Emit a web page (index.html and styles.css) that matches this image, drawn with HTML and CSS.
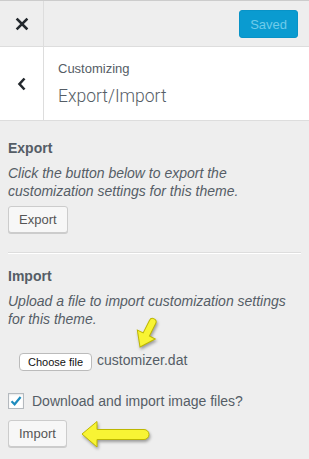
FILE: index.html
```html
<!DOCTYPE html>
<html lang="en">
<head>
    <meta charset="UTF-8">
    <meta name="viewport" content="width=device-width, initial-scale=1.0">
    <title>Customizing Export/Import</title>
    <link rel="stylesheet" href="styles.css">
</head>
<body>
    <header class="topbar">
        <div class="close">
            <svg width="14" height="14" viewBox="0 0 14 14"><path d="M2.5 2.5 L11.5 11.5 M11.5 2.5 L2.5 11.5" stroke="#23282d" stroke-width="2.5" stroke-linecap="square"/></svg>
        </div>
        <div class="topbar-actions">
            <button class="btn-saved">Saved</button>
        </div>
    </header>

    <div class="section-title">
        <div class="back">
            <svg width="12" height="14" viewBox="0 0 12 14"><path d="M8.5 1.5 L3.5 7 L8.5 12.5" fill="none" stroke="#23282d" stroke-width="2.6"/></svg>
        </div>
        <div class="title-text">
            <span class="crumb">Customizing</span>
            <h3 class="panel-name">Export/Import</h3>
        </div>
    </div>

    <main class="controls">
        <section class="control">
            <h4 class="control-title">Export</h4>
            <p class="control-desc">Click the button below to export the customization settings for this theme.</p>
            <button class="wp-btn">Export</button>
        </section>

        <section class="control control-import">
            <h4 class="control-title">Import</h4>
            <p class="control-desc">Upload a file to import customization settings for this theme.</p>
            <div class="file-row">
                <button class="file-btn">Choose file</button>
                <span class="file-name">customizer.dat</span>
            </div>
            <label class="check-row">
                <span class="checkbox">
                    <svg width="14" height="14" viewBox="0 0 14 14"><path d="M2.5 7.2 L5.6 10.3 L11.6 3" fill="none" stroke="#1e8cbe" stroke-width="2.2"/></svg>
                </span>
                Download and import image files?
            </label>
            <button class="wp-btn">Import</button>
        </section>
    </main>

    <!-- yellow pointer arrows drawn over the screenshot -->
    <svg class="annotations" width="309" height="459" viewBox="0 0 309 459">
        <path transform="translate(153.9 319.3) rotate(116.6)" d="M31 0 L17 -10 L17 -3.5 L3 -3.5 A3.5 3.5 0 0 0 3 3.5 L17 3.5 L17 10 Z" fill="#f8f434" stroke="#bdb700" stroke-width="1"/>
        <path d="M82 434 L97 421.5 L97 429.5 L144 429.5 A5 5 0 0 1 144 439.5 L97 439.5 L97 447 Z" fill="#f8f434" stroke="#bdb700" stroke-width="1"/>
    </svg>
</body>
</html>
```

FILE: styles.css
```css
body {
    margin: 0;
    background: #eee;
    font-family: "Liberation Sans", Arial, sans-serif;
    color: #555d66;
    position: relative;
    width: 309px;
    height: 459px;
    overflow: hidden;
}

.topbar {
    display: flex;
    height: 45px;
    border-top: 1px solid #ccc;
    border-bottom: 1px solid #ddd;
    background: #eee;
}

.close {
    width: 43px;
    border-right: 1px solid #ddd;
    display: flex;
    justify-content: center;
    align-items: center;
}

.topbar-actions {
    flex: 1;
    display: flex;
    justify-content: flex-end;
    align-items: center;
    padding-right: 11px;
}

.btn-saved {
    height: 28px;
    padding: 0 10px;
    margin-top: 1px;
    border: 1px solid #0893c7;
    border-radius: 3px;
    background: #0a9bd0;
    color: #6fcbea;
    font-family: "Liberation Sans", Arial, sans-serif;
    font-size: 13px;
}

.section-title {
    display: flex;
    height: 73px;
    background: #fff;
    border-bottom: 1px solid #ddd;
}

.back {
    width: 43px;
    border-right: 1px solid #ddd;
    display: flex;
    justify-content: center;
    align-items: center;
}

.title-text {
    padding: 14px 0 0 14px;
}

.crumb {
    display: block;
    font-size: 13px;
    line-height: 16px;
}

.panel-name {
    margin: 6px 0 0;
    font-family: Roboto, "Liberation Sans", sans-serif;
    font-weight: 300;
    font-size: 17.5px;
    line-height: 26px;
    color: #555d66;
}

.controls {
    padding: 0 8px;
}

.control {
    padding: 17px 0 19px;
}

.control + .control {
    border-top: 1px solid #ddd;
    box-shadow: inset 0 1px 0 #fff;
    padding-top: 13px;
}

.control-title {
    margin: 0;
    font-size: 14px;
    line-height: 20px;
    font-weight: bold;
}

.control-desc {
    margin: 6px 0 0;
    font-size: 14px;
    line-height: 18px;
    font-style: italic;
}

.wp-btn {
    display: block;
    margin-top: 6px;
    height: 27px;
    padding: 0 10px;
    border: 1px solid #ccc;
    border-radius: 3px;
    background: #f7f7f7;
    box-shadow: 0 1px 0 #ccc;
    color: #555;
    font-family: "Liberation Sans", Arial, sans-serif;
    font-size: 13px;
}

.file-row {
    display: flex;
    align-items: flex-start;
    margin: 25px 0 0 11px;
}

.file-btn {
    height: 18px;
    padding: 0 8px;
    border: 1px solid #bbb;
    border-radius: 4px;
    background: #fff;
    color: #111;
    font-family: "Liberation Sans", Arial, sans-serif;
    font-size: 11px;
    line-height: 16px;
}

.file-name {
    margin-left: 5px;
    font-size: 14px;
    line-height: 14px;
}

.check-row {
    display: flex;
    align-items: center;
    gap: 8px;
    margin-top: 22px;
    font-size: 14px;
    line-height: 16px;
}

.checkbox {
    width: 14px;
    height: 14px;
    border: 1px solid #b4b9be;
    background: #fff;
    box-shadow: inset 0 1px 2px rgba(0, 0, 0, 0.1);
    display: flex;
    justify-content: center;
    align-items: center;
}

.control-import .wp-btn {
    margin-top: 11px;
}

.annotations {
    position: absolute;
    top: 0;
    left: 0;
    pointer-events: none;
    filter: drop-shadow(1px 2px 1.5px rgba(0, 0, 0, 0.35));
}
```
